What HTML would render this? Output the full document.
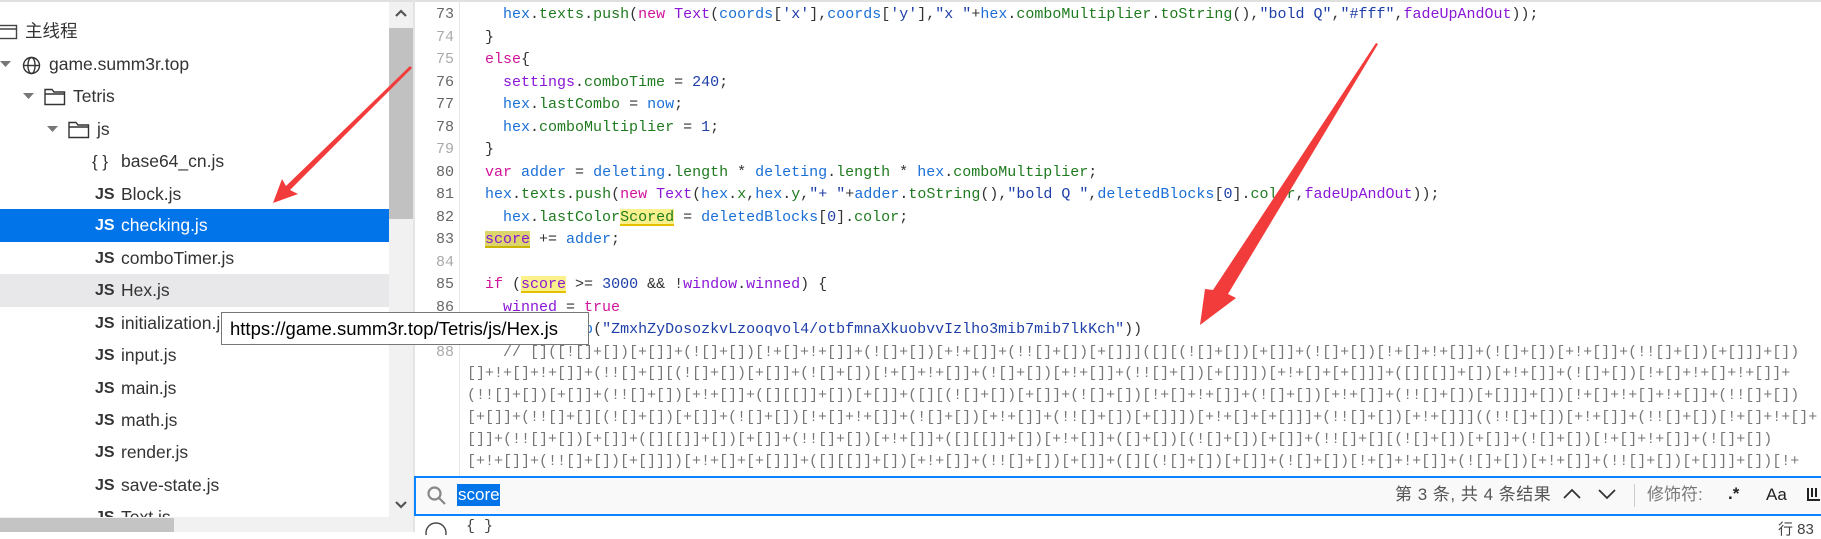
<!DOCTYPE html>
<html><head><meta charset="utf-8">
<style>
*{margin:0;padding:0;box-sizing:border-box}
body{width:1821px;height:532px;overflow:hidden;background:#fff;position:relative;font-family:"Liberation Sans","Noto Sans CJK SC",sans-serif;color:#333}
.abs{position:absolute}
.row{position:absolute;left:0;width:389px;height:33px;font-size:17.5px;line-height:33px;white-space:nowrap}
.js{position:absolute;left:95px;font-weight:bold;font-size:16px;color:#333;letter-spacing:0px}
.nm{position:absolute;left:121px}
.ln{position:absolute;left:414px;width:40px;text-align:right;font-family:"Liberation Mono",monospace;font-size:15px;color:#666;height:22px;line-height:22px}
.ln.l{color:#aaa}
.cd{position:absolute;left:485px;font-family:"Liberation Mono",monospace;font-size:15px;white-space:pre;height:22px;line-height:22px;color:#333}
.b{color:#1a6fd6}.g{color:#1f7a1f}.m{color:#d0139a}.p{color:#8a16d6}.n{color:#1d3ea8}.s{color:#1d3ea8}.y{background:#fbf18c;box-shadow:inset 0 -2px 0 #e4c000}.y2{background:#dcd56c;box-shadow:inset 0 -2px 0 #c9b400}
.w{position:absolute;left:467px;width:1350px;overflow:hidden;font-family:"Liberation Mono",monospace;font-size:15px;white-space:pre;color:#777;height:22px;line-height:22px}
</style></head><body>
<div class="abs" style="left:0;top:0;width:1821px;height:2px;background:#e0e0e0"></div>
<!-- left tree -->
<div class="row" style="top:15px"><svg class="abs" style="left:-2px;top:9px" width="20" height="16"><rect x="0.5" y="1.5" width="18" height="13" fill="none" stroke="#444" stroke-width="1.4"/><line x1="0" y1="5" x2="19" y2="5" stroke="#444" stroke-width="1.4"/></svg><span class="abs" style="left:25px">主线程</span></div>
<div class="row" style="top:48px"><svg class="abs" style="left:0;top:13px" width="12" height="8"><polygon points="0,0 11,0 5.5,6" fill="#777"/></svg><svg class="abs" style="left:22px;top:8px" width="19" height="19" fill="none" stroke="#333" stroke-width="1.4"><circle cx="9.5" cy="9.5" r="8"/><ellipse cx="9.5" cy="9.5" rx="3.6" ry="8"/><line x1="1.5" y1="9.5" x2="17.5" y2="9.5"/></svg><span class="abs" style="left:49px">game.summ3r.top</span></div>
<div class="row" style="top:80px"><svg class="abs" style="left:23px;top:13px" width="12" height="8"><polygon points="0,0 11,0 5.5,6" fill="#777"/></svg><svg class="abs" style="left:44px;top:7px" width="22" height="19" fill="none" stroke="#333" stroke-width="1.4"><path d="M1 2.5h7l2 2.5h10.5v12.5H1z M1 7h19.5"/></svg><span class="abs" style="left:73px">Tetris</span></div>
<div class="row" style="top:113px"><svg class="abs" style="left:47px;top:13px" width="12" height="8"><polygon points="0,0 11,0 5.5,6" fill="#777"/></svg><svg class="abs" style="left:68px;top:7px" width="22" height="19" fill="none" stroke="#333" stroke-width="1.4"><path d="M1 2.5h7l2 2.5h10.5v12.5H1z M1 7h19.5"/></svg><span class="abs" style="left:97px">js</span></div>
<div class="row" style="top:145px"><span class="abs" style="left:92px;font-size:17px">{ }</span><span class="nm">base64_cn.js</span></div>
<div class="row" style="top:178px"><span class="js">JS</span><span class="nm">Block.js</span></div>
<div class="row" style="top:209px;background:#0074e8;color:#fff;height:33px"><span class="js" style="color:#fff">JS</span><span class="nm">checking.js</span></div>
<div class="row" style="top:242px"><span class="js">JS</span><span class="nm">comboTimer.js</span></div>
<div class="row" style="top:274px;background:#e8e8ea"><span class="js">JS</span><span class="nm">Hex.js</span></div>
<div class="row" style="top:307px"><span class="js">JS</span><span class="nm">initialization.js</span></div>
<div class="row" style="top:339px"><span class="js">JS</span><span class="nm">input.js</span></div>
<div class="row" style="top:372px"><span class="js">JS</span><span class="nm">main.js</span></div>
<div class="row" style="top:404px"><span class="js">JS</span><span class="nm">math.js</span></div>
<div class="row" style="top:436px"><span class="js">JS</span><span class="nm">render.js</span></div>
<div class="row" style="top:469px"><span class="js">JS</span><span class="nm">save-state.js</span></div>
<div class="row" style="top:501px"><span class="js">JS</span><span class="nm">Text.js</span></div>
<div class="abs" style="left:0;top:517px;width:389px;height:15px;background:#f1f1f1"></div>
<div class="abs" style="left:0;top:518px;width:174px;height:14px;background:#c4c4c4"></div>
<!-- scrollbar -->
<div class="abs" style="left:389px;top:2px;width:24px;height:530px;background:#f1f1f1"></div>
<div class="abs" style="left:389px;top:28px;width:24px;height:191px;background:#c1c1c1"></div>
<svg class="abs" style="left:394px;top:8px" width="14" height="10"><path d="M2 8L7 3L12 8" stroke="#555" stroke-width="2.2" fill="none"/></svg>
<svg class="abs" style="left:394px;top:500px" width="14" height="10"><path d="M2 2L7 7L12 2" stroke="#555" stroke-width="2.2" fill="none"/></svg>
<div class="abs" style="left:413px;top:0;width:2px;height:532px;background:#e4e4e4"></div>
<div class="abs" style="left:459px;top:0;width:1px;height:476px;background:#e6e6e6"></div>
<!-- code -->
<div class="ln" style="top:4px">73</div><div class="cd" style="top:4px">  <span class="b">hex</span>.<span class="g">texts</span>.<span class="g">push</span>(<span class="m">new</span> <span class="p">Text</span>(<span class="b">coords</span>[<span class="s">'x'</span>],<span class="b">coords</span>[<span class="s">'y'</span>],<span class="s">"x "</span>+<span class="b">hex</span>.<span class="g">comboMultiplier</span>.<span class="g">toString</span>(),<span class="s">"bold Q"</span>,<span class="s">"#fff"</span>,<span class="p">fadeUpAndOut</span>));</div>
<div class="ln l" style="top:26.5px">74</div><div class="cd" style="top:26.5px">}</div>
<div class="ln l" style="top:49px">75</div><div class="cd" style="top:49px"><span class="m">else</span>{</div>
<div class="ln" style="top:71.5px">76</div><div class="cd" style="top:71.5px">  <span class="p">settings</span>.<span class="g">comboTime</span> = <span class="n">240</span>;</div>
<div class="ln" style="top:94px">77</div><div class="cd" style="top:94px">  <span class="b">hex</span>.<span class="g">lastCombo</span> = <span class="b">now</span>;</div>
<div class="ln" style="top:116.5px">78</div><div class="cd" style="top:116.5px">  <span class="b">hex</span>.<span class="g">comboMultiplier</span> = <span class="n">1</span>;</div>
<div class="ln l" style="top:139px">79</div><div class="cd" style="top:139px">}</div>
<div class="ln" style="top:161.5px">80</div><div class="cd" style="top:161.5px"><span class="m">var</span> <span class="b">adder</span> = <span class="b">deleting</span>.<span class="g">length</span> * <span class="b">deleting</span>.<span class="g">length</span> * <span class="b">hex</span>.<span class="g">comboMultiplier</span>;</div>
<div class="ln" style="top:184px">81</div><div class="cd" style="top:184px"><span class="b">hex</span>.<span class="g">texts</span>.<span class="g">push</span>(<span class="m">new</span> <span class="p">Text</span>(<span class="b">hex</span>.<span class="g">x</span>,<span class="b">hex</span>.<span class="g">y</span>,<span class="s">"+ "</span>+<span class="b">adder</span>.<span class="g">toString</span>(),<span class="s">"bold Q "</span>,<span class="b">deletedBlocks</span>[<span class="n">0</span>].<span class="g">color</span>,<span class="p">fadeUpAndOut</span>));</div>
<div class="ln" style="top:206.5px">82</div><div class="cd" style="top:206.5px">  <span class="b">hex</span>.<span class="g">lastColor<span class="y">Scored</span></span> = <span class="b">deletedBlocks</span>[<span class="n">0</span>].<span class="g">color</span>;</div>
<div class="ln" style="top:229px">83</div><div class="cd" style="top:229px"><span class="p y2">score</span> += <span class="b">adder</span>;</div>
<div class="ln l" style="top:251.5px">84</div>
<div class="ln" style="top:274px">85</div><div class="cd" style="top:274px"><span class="m">if</span> (<span class="p y">score</span> &gt;= <span class="n">3000</span> &amp;&amp; !<span class="p">window</span>.<span class="p">winned</span>) {</div>
<div class="ln" style="top:296.5px">86</div><div class="cd" style="top:296.5px">  <span class="p">winned</span> = <span class="m">true</span></div>
<div class="ln" style="top:319px">87</div><div class="cd" style="top:319px">  <span class="b">alert</span>(<span class="b">atob</span>(<span class="s">"ZmxhZyDosozkvLzooqvol4/otbfmnaXkuobvvIzlho3mib7mib7lkKch"</span>))</div>
<div class="ln l" style="top:341.5px">88</div><div class="cd" style="top:341.5px;color:#777;width:1330px;overflow:hidden">  // []([![]+[])[+[]]+(![]+[])[!+[]+!+[]]+(![]+[])[+!+[]]+(!![]+[])[+[]]]([][(![]+[])[+[]]+(![]+[])[!+[]+!+[]]+(![]+[])[+!+[]]+(!![]+[])[+[]]]+[])</div>
<div class="w" style="top:363px">[]+!+[]+!+[]]+(!![]+[][(![]+[])[+[]]+(![]+[])[!+[]+!+[]]+(![]+[])[+!+[]]+(!![]+[])[+[]]])[+!+[]+[+[]]]+([][[]]+[])[+!+[]]+(![]+[])[!+[]+!+[]+!+[]]+</div>
<div class="w" style="top:385px">(!![]+[])[+[]]+(!![]+[])[+!+[]]+([][[]]+[])[+[]]+([][(![]+[])[+[]]+(![]+[])[!+[]+!+[]]+(![]+[])[+!+[]]+(!![]+[])[+[]]]+[])[!+[]+!+[]+!+[]]+(!![]+[])</div>
<div class="w" style="top:407px">[+[]]+(!![]+[][(![]+[])[+[]]+(![]+[])[!+[]+!+[]]+(![]+[])[+!+[]]+(!![]+[])[+[]]])[+!+[]+[+[]]]+(!![]+[])[+!+[]]]((!![]+[])[+!+[]]+(!![]+[])[!+[]+!+[]+!+[]]+</div>
<div class="w" style="top:429px">[]]+(!![]+[])[+[]]+([][[]]+[])[+[]]+(!![]+[])[+!+[]]+([][[]]+[])[+!+[]]+([]+[])[(![]+[])[+[]]+(!![]+[][(![]+[])[+[]]+(![]+[])[!+[]+!+[]]+(![]+[])</div>
<div class="w" style="top:451px">[+!+[]]+(!![]+[])[+[]]])[+!+[]+[+[]]]+([][[]]+[])[+!+[]]+(!![]+[])[+[]]+([][(![]+[])[+[]]+(![]+[])[!+[]+!+[]]+(![]+[])[+!+[]]+(!![]+[])[+[]]]+[])[!+</div>
<!-- search bar -->
<div class="abs" style="left:414px;top:476px;width:1407px;height:40px;background:#f9f9fa;border-top:2px solid #0a84ff;border-bottom:2px solid #0a84ff;border-left:2px solid #0a84ff"></div>
<svg class="abs" style="left:426px;top:485px" width="22" height="22" fill="none" stroke="#888" stroke-width="2.2"><circle cx="8.5" cy="8.5" r="6"/><line x1="13" y1="13" x2="19" y2="19"/></svg>
<div class="abs" style="left:457px;top:484px;height:22px;width:43px;background:#0074e8;color:#fff;font-size:17px;line-height:22px;padding-left:1px">score</div>
<div class="abs" style="left:1395px;top:484px;font-size:17px;color:#555;line-height:22px;letter-spacing:0.5px">第 3 条, 共 4 条结果</div>
<svg class="abs" style="left:1562px;top:487px" width="20" height="14"><path d="M2 11L10 3L18 11" stroke="#333" stroke-width="1.8" fill="none"/></svg>
<svg class="abs" style="left:1597px;top:487px" width="20" height="14"><path d="M2 3L10 11L18 3" stroke="#333" stroke-width="1.8" fill="none"/></svg>
<div class="abs" style="left:1634px;top:484px;width:1px;height:23px;background:#ccc"></div>
<div class="abs" style="left:1647px;top:484px;font-size:17px;color:#777;line-height:22px">修饰符:</div>
<div class="abs" style="left:1728px;top:483px;font-size:17px;color:#222;font-weight:bold;line-height:22px">.*</div>
<div class="abs" style="left:1766px;top:484px;font-size:17px;color:#222;line-height:22px">Aa</div>
<svg class="abs" style="left:1806px;top:487px" width="15" height="16" fill="none" stroke="#222" stroke-width="2"><path d="M2 1v12h12 M6 1v9 M10 1v9"/></svg>
<!-- bottom row -->
<svg class="abs" style="left:424px;top:521px" width="24" height="14" fill="none" stroke="#444" stroke-width="1.4"><circle cx="12" cy="12" r="10"/></svg>
<div class="abs" style="left:466px;top:518px;font-size:15px;color:#444;font-family:'Liberation Mono',monospace">{ }</div>
<div class="abs" style="left:1778px;top:518px;font-size:15px;color:#444">行 83</div>
<!-- tooltip -->
<div class="abs" style="left:221px;top:312px;width:368px;height:33px;background:#fff;border:1px solid #777;font-size:18.5px;line-height:31px;padding-left:8px;color:#000;white-space:nowrap">https://game.summ3r.top/Tetris/js/Hex.js</div>
<!-- red arrows -->
<svg class="abs" style="left:0;top:0" width="1821" height="532">
<polygon points="410,66 412,68 290,190 298,194 273,203 282,179 286,186" fill="#f23b3b"/>
<polygon points="1376,43 1378,44 1228,294 1236,298 1200,325 1205,289 1213,290" fill="#f23b3b"/>
</svg>
</body></html>
